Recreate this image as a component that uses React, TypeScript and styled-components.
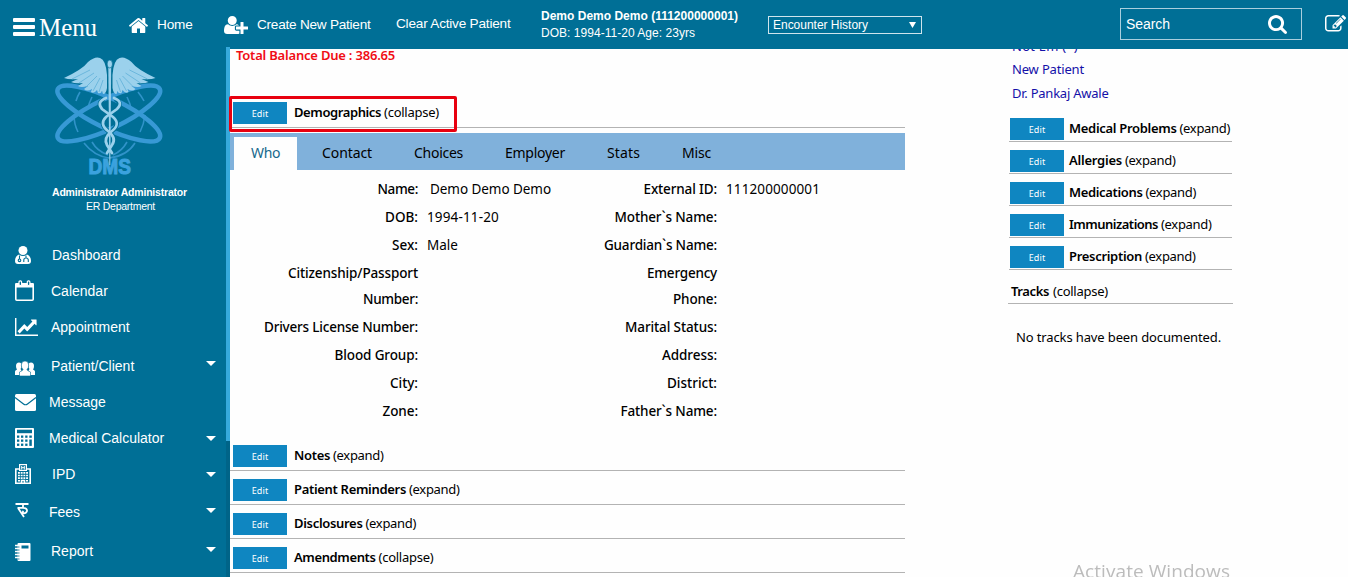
import React, { useLayoutEffect, useRef, useState } from 'react';
import styled, { createGlobalStyle, css } from 'styled-components';

const SANS = '"Liberation Sans", Arial, sans-serif';
const HUMANIST = '"Noto Sans", "Open Sans", sans-serif';
const TEAL = '#006f96';

const GlobalStyle = createGlobalStyle`
  * { box-sizing: border-box; }
  html, body { margin: 0; padding: 0; overflow: hidden; background: #fefefe; }
`;

/* ---------- text that tracks itself to a given measure ---------- */

const Tracked = styled.span`
  display: inline-block;
  white-space: pre;
`;

function Fit({ w, children }: { w: number; children: string }) {
  const ref = useRef<HTMLSpanElement>(null);
  const [spacing, setSpacing] = useState(0);
  useLayoutEffect(() => {
    if (!ref.current) return;
    const natural = ref.current.getBoundingClientRect().width;
    setSpacing((w - natural) / children.length);
  }, [w, children]);
  return (
    <Tracked ref={ref} style={{ letterSpacing: `${spacing}px` }}>
      {children}
    </Tracked>
  );
}

/* ---------- shell ---------- */

const Page = styled.div`
  display: flex;
  flex-direction: column;
  width: 1348px;
  height: 577px;
  overflow: hidden;
  background: #fefefe;
`;

const Header = styled.header`
  display: flex;
  flex: none;
  height: 49px;
  background: ${TEAL};
  color: #fff;
  font: 13.6px/16px ${SANS};
`;

const Body = styled.div`
  display: flex;
  flex: 1;
  min-height: 0;
`;

/* ---------- header ---------- */

const MenuButton = styled.div`
  display: flex;
  align-items: flex-start;
  width: 129px;
  padding: 18px 0 0 13px;
`;

const MenuLabel = styled.span`
  margin: -6px 0 0 4px;
  font: 25px/32px "Liberation Serif", "Times New Roman", serif;
`;

const HeaderLink = styled.div<{ $width: number; $gap?: number; $top: number }>`
  display: flex;
  align-items: center;
  gap: ${(p) => p.$gap ?? 0}px;
  width: ${(p) => p.$width}px;
  height: 18px;
  margin-top: ${(p) => p.$top}px;
  white-space: nowrap;
`;

const PatientInfo = styled.div`
  width: 227px;
  padding-top: 8px;
  font-size: 12px;
  line-height: 17px;
`;

const EncounterSelect = styled.div`
  display: flex;
  align-items: center;
  justify-content: space-between;
  width: 154px;
  height: 18px;
  margin-top: 16px;
  padding: 0 5px 0 4px;
  border: 1px solid #cfe4ec;
  font-size: 12px;
`;

const SearchBox = styled.div`
  display: flex;
  align-items: flex-start;
  justify-content: space-between;
  width: 182px;
  height: 32px;
  margin: 8px 0 0 198px;
  padding: 6px 14px 0 5px;
  border: 1px solid #a9cfde;
  font-size: 14px;
  line-height: 18px;
`;

const EditNote = styled.div`
  margin: 15px 0 0 23px;
`;

/* ---------- sidebar ---------- */

const Sidebar = styled.nav`
  width: 226px;
  flex: none;
  background: ${TEAL};
  color: #fff;
`;

const LogoArea = styled.div`
  display: flex;
  justify-content: center;
  height: 134px;
  padding: 6px 0 0;
  margin-right: 8px;
`;

const UserName = styled.div`
  margin-right: -13px;
  width: 239px;
  text-align: center;
  font: bold 10.5px/14px ${SANS};
  padding-top: 2px;
`;

const Department = styled.div`
  width: 241px;
  text-align: center;
  font: 10.5px/14px ${SANS};
`;

const NavList = styled.div`
  padding-top: 24px;
`;

const NavItem = styled.div<{ $before?: number }>`
  display: flex;
  align-items: center;
  height: 36px;
  margin-top: ${(p) => p.$before ?? 0}px;
  padding: 0 10px 0 15px;
  font: 14px/18px ${SANS};
`;

const NavIcon = styled.span<{ $slot: number; $drop?: number }>`
  display: flex;
  width: ${(p) => p.$slot}px;
  margin-top: ${(p) => p.$drop ?? 0}px;
`;

const NavLabel = styled.span`
  flex: 1;
`;

const Caret = styled.span<{ $lift: number }>`
  border: 5px solid transparent;
  border-top-color: #fff;
  border-bottom: 0;
  margin-top: ${(p) => p.$lift}px;
`;

const ScrollTrack = styled.div`
  position: relative;
  flex: none;
  width: 4px;
  margin-top: -2px;
  background: #006488;
`;

const ScrollThumb = styled.div`
  height: 394px;
  background: #36a9dc;
`;

/* ---------- main column ---------- */

const Main = styled.main`
  width: 675px;
  flex: none;
  color: #000;
  font: 13.5px/22px ${HUMANIST};
`;

const Balance = styled.div`
  margin-top: -5px;
  padding-left: 6px;
  color: #f00c14;
  font-size: 13px;
  font-weight: 600;
`;

const Section = styled.div<{ $before?: number; $side?: boolean }>`
  display: flex;
  height: ${(p) => (p.$side ? 28 : 30)}px;
  margin: ${(p) => p.$before ?? 4}px ${(p) => (p.$side ? 1 : 0)}px 0;
  padding: 4px 0 0 ${(p) => (p.$side ? 1 : 3)}px;
  border-bottom: 1px solid #b3b3b3;
  font-size: 13px;
  line-height: 21px;
  white-space: nowrap;

  b { font-weight: 600; margin-right: 3px; }
`;

const EditButton = styled.span<{ $gap: number }>`
  display: flex;
  align-items: center;
  justify-content: center;
  width: 54px;
  height: 22px;
  margin-right: ${(p) => p.$gap}px;
  background: #0f86c1;
  color: #fff;
  font-size: 9px;
`;

const Highlighted = styled.div`
  position: relative;
`;

const HighlightFrame = styled.div`
  position: absolute;
  left: -1px;
  top: -2px;
  width: 228px;
  height: 36px;
  border: 3px solid #e8000f;
  border-radius: 2px;
`;

const TabBar = styled.div`
  display: flex;
  gap: 8px;
  height: 37px;
  margin-top: 5px;
  padding: 4px 0 0 4px;
  background: #80b1db;
  font-size: 14px;
`;

const Tab = styled.div<{ $active?: boolean }>`
  padding: 0 17px;
  line-height: 32px;
  ${(p) =>
    p.$active &&
    css`
      background: #fefefe;
      color: #16688c;
    `}
`;

const Form = styled.div`
  padding: 5px 0 12px;
`;

const FormRow = styled.div<{ $tall?: boolean }>`
  display: grid;
  grid-template-columns: 188px 197px 102px 1fr;
  height: ${(p) => (p.$tall ? 54 : 28)}px;
  padding-top: 1px;
  line-height: 26px;
  white-space: nowrap;
`;

const Label = styled.div`
  display: flex;
  flex-direction: column;
  align-items: flex-end;
  font-weight: 500;
`;

const Value = styled.div<{ $indent: number }>`
  padding-left: ${(p) => p.$indent}px;
`;

/* ---------- right column ---------- */

const Aside = styled.aside`
  width: 225px;
  margin-left: 103px;
  overflow: hidden;
  color: #000;
  font: 13.5px/24px ${HUMANIST};
`;

const Links = styled.div`
  margin-top: -16px;
  padding: 0 0 5px 4px;
  color: #1410a8;
  font-size: 13px;

  div { height: 24px; }
  div:first-child { line-height: 26px; }
`;

const TracksTitle = styled.div`
  height: 34px;
  padding: 11px 0 0 3px;
  border-bottom: 1px solid #b3b3b3;
  font-size: 13px;
  line-height: 21px;

  b { font-weight: 600; margin-right: 4px; }
`;

const NoTracks = styled.div`
  padding: 21px 0 0 8px;
  font-size: 13px;
`;

const Watermark = styled.div`
  position: fixed;
  left: 1073px;
  top: 557px;
  color: #bcbcbc;
  font: 19px/28px "Open Sans", sans-serif;
`;

/* ---------- icons ---------- */

const PATHS = {
  home: 'M1472 992v480q0 26-19 45t-45 19h-384v-384h-256v384h-384q-26 0-45-19t-19-45v-480q0-1 .5-3t.5-3l575-474 575 474q1 2 1 6zm223-69l-62 74q-8 9-21 11h-3q-13 0-21-7l-692-577-692 577q-12 8-24 7-13-2-21-11l-62-74q-8-10-7-23.500t11-21.500l719-599q32-26 76-26t76 26l244 204v-195q0-14 9-23t23-9h192q14 0 23 9t9 23v408l219 182q10 8 11 21.500t-7 23.500z',
  userPlus:
    'M704 896q-159 0-271.500-112.500t-112.500-271.500 112.500-271.500 271.500-112.500 271.500 112.500 112.500 271.500-112.500 271.500-271.500 112.500zm960 128h352q13 0 22.500 9.500t9.500 22.500v192q0 13-9.500 22.500t-22.500 9.500h-352v352q0 13-9.500 22.500t-22.500 9.500h-192q-13 0-22.500-9.500t-9.500-22.500v-352h-352q-13 0-22.500-9.500t-9.500-22.500v-192q0-13 9.500-22.500t22.500-9.500h352v-352q0-13 9.500-22.500t22.500-9.500h192q13 0 22.500 9.500t9.500 22.500v352zm-736 224q0 52 38 90t90 38h256v238q-68 50-171 50h-874q-121 0-194-69t-73-190q0-53 3.500-103.500t14-109 26.500-108.500 43-97.500 62-81 85.500-53.500 111.500-20q19 0 39 17 79 61 154.500 91.500t164.500 30.500 164.500-30.500 154.500-91.500q20-17 39-17 132 0 217 96h-223q-52 0-90 38t-38 90v192z',
  search:
    'M1216 832q0-185-131.500-316.500t-316.500-131.500-316.500 131.500-131.500 316.500 131.500 316.500 316.500 131.500 316.500-131.500 131.500-316.500zm512 832q0 52-38 90t-90 38q-54 0-90-38l-343-342q-179 124-399 124-143 0-273.500-55.500t-225-150-150-225-55.500-273.500 55.500-273.500 150-225 225-150 273.500-55.500 273.500 55.500 225 150 150 225 55.500 273.500q0 220-124 399l343 343q37 37 37 90z',
  compose:
    'M888 1184l116-116-152-152-116 116v56h96v96h56zm440-720q-16-16-33 1l-350 350q-17 17-1 33t33-1l350-350q17-17 1-33zm80 594v190q0 119-84.500 203.500t-203.500 84.500h-832q-119 0-203.500-84.500t-84.500-203.500v-832q0-119 84.500-203.500t203.500-84.500h832q63 0 117 25 15 7 18 23 3 17-9 29l-49 49q-14 14-32 8-23-6-45-6h-832q-66 0-113 47t-47 113v832q0 66 47 113t113 47h832q66 0 113-47t47-113v-126q0-13 9-22l64-64q15-15 35-7t20 29zm-96-738l288 288-672 672h-288v-288zm444 132l-92 92-288-288 92-92q28-28 68-28t68 28l152 152q28 28 28 68t-28 68z',
  chart:
    'M2048 1536v128h-2048v-1536h128v1408h1920zm-128-1248v435q0 21-19.500 29.500t-35.500-7.500l-121-121-633 633q-10 10-23 10t-23-10l-233-233-416 416-192-192 585-585q10-10 23-10t23 10l233 233 464-464-121-121q-16-16-7.500-35.500t29.500-19.500h435q14 0 23 9t9 23z',
};

function Glyph({ d, box, w, h }: { d: string; box: string; w: number; h: number }) {
  return (
    <svg width={w} height={h} viewBox={box} fill="#fff" preserveAspectRatio="none">
      <path d={d} />
    </svg>
  );
}

const BarsIcon = () => (
  <svg width="22" height="18" fill="#fff">
    <rect width="22" height="4" rx="1" />
    <rect y="7" width="22" height="4" rx="1" />
    <rect y="14" width="22" height="4" rx="1" />
  </svg>
);

const DoctorIcon = () => (
  <svg width="16" height="18" viewBox="0 0 16 18" fill="#fff">
    <circle cx="8" cy="4.500" r="4.500" />
    <path d="M4 8.500Q8 11.500 12 8.500Q16 10 16 15Q16 18 13 18H3Q0 18 0 15Q0 10 4 8.500Z" />
    <g fill="none" stroke={TEAL} strokeWidth="1.100">
      <path d="M4.500 9.500V13M11 9.500V12M8.800 16V14Q8.800 12 11 12T13.300 14V16" />
      <circle cx="4.500" cy="14.300" r="1.300" />
    </g>
  </svg>
);

const CalendarIcon = () => (
  <svg width="19" height="21" viewBox="0 0 19 21" fill="none" stroke="#fff">
    <rect x=".8" y="4" width="17.400" height="16.200" rx="1" strokeWidth="1.600" />
    <path d="M.7 3.500H18.300V7H.7Z" fill="#fff" strokeWidth="1" />
    <rect x="4" y=".8" width="2.600" height="4.700" rx="1.200" fill={TEAL} strokeWidth="1.200" />
    <rect x="12.300" y=".8" width="2.600" height="4.700" rx="1.200" fill={TEAL} strokeWidth="1.200" />
  </svg>
);

const PeopleIcon = () => (
  <svg width="20" height="15" viewBox="0 0 20 15" fill="#fff">
    <path d="M1 5Q1 1.500 4 1.500T6.500 5Q6.500 7 5.500 8L6.500 9.500V14H0V10.500Q0 9.500 2 8.500Q1 7 1 5Z" />
    <path d="M19 5Q19 1.500 16 1.500T13.500 5Q13.500 7 14.500 8L13.500 9.500V14H20V10.500Q20 9.500 18 8.500Q19 7 19 5Z" />
    <path
      d="M6.300 4Q6.300 0 10 0T13.700 4Q13.700 7 12 8.500Q12 9.500 15.500 11V15H4.500V11Q8 9.500 8 8.500Q6.300 7 6.300 4Z"
      stroke={TEAL}
      strokeWidth=".6"
    />
  </svg>
);

const MailIcon = () => (
  <svg width="21" height="17" viewBox="0 0 21 17">
    <rect width="21" height="17" rx="1.500" fill="#fff" />
    <path d="M0 3.500L8.500 10Q10.500 11.500 12.500 10L21 3.500" fill="none" stroke={TEAL} strokeWidth="1.200" />
  </svg>
);

const CalculatorIcon = () => (
  <svg width="19" height="20" viewBox="0 0 19 20" fill="#fff">
    <rect width="19" height="20" rx="1" />
    <g fill={TEAL}>
      <rect x="2" y="1.700" width="15" height="3.500" />
      {[7.5, 11.5, 15.6].map((y) =>
        [2, 6, 10.2].map((x) => <rect key={`${x}-${y}`} x={x} y={y} width="2.300" height="2.300" />),
      )}
      <rect x="14.300" y="7.500" width="2.500" height="2.300" />
      <rect x="14.300" y="11.500" width="2.500" height="6.400" />
    </g>
  </svg>
);

const HospitalIcon = () => (
  <svg width="16" height="20" viewBox="0 0 16 20" fill="none" stroke="#fff">
    <path d="M.8 5H15.200V19.200H.8Z" strokeWidth="1.600" />
    <rect x="4.600" y=".6" width="6.800" height="5.800" fill={TEAL} strokeWidth="1.200" />
    <path d="M6.700 2V5.500M9.300 2V5.500M6.700 3.700H9.300" strokeWidth="1" />
    <path d="M3 8.800H13M3 11.500H13M3 14.200H13" strokeWidth="1.700" strokeDasharray="1.900 .8" />
    <path d="M3 16.700H5M11 16.700H13M6.500 19V16.500H9.500V19" strokeWidth="1.500" />
  </svg>
);

const RupeeIcon = () => (
  <svg width="14" height="15" viewBox="0 0 14 15" fill="none" stroke="#fff" strokeWidth="1.800">
    <path d="M.5 1H13.500M8 1V5M2.500 4.800H8Q12.300 5 12 8Q11.300 10.300 8.800 10.300Q7 9.500 8.500 8M3 5Q6 9.500 9 14" />
  </svg>
);

const NotebookIcon = () => (
  <svg width="16" height="18" viewBox="0 0 16 18">
    <rect x="2.500" width="13" height="18" rx="1" fill="#fff" />
    <rect x="6.500" y="2.500" width="7" height="3" fill={TEAL} />
    <path d="M0 2.500H4M0 5.500H4M0 8.500H4M0 11.500H4M0 14.500H4" stroke="#fff" strokeWidth="1.500" />
    <path d="M2.500 4H4.500M2.500 7H4.500M2.500 10H4.500M2.500 13H4.500M2.500 16H4.500" stroke={TEAL} strokeWidth=".8" />
  </svg>
);

const WING =
  'M64 78Q83 69 88 62Q95 56 100 58Q106 60 107 75V88Q106 94 103 94L102 91Q101 94 98 93L97 90Q94 94 91 92L92 89Q87 92 84 89L88 86Q81 88 78 86L83 83Q75 84 71 82L78 79Q69 80 64 78Z';

const DmsLogo = () => (
  <svg width="118" height="121" viewBox="50 55 118 121" fill="none">
    <g stroke="#3093c9" strokeWidth="1.600">
      <path d="M84 143Q94 156 109 158Q127 156 135 143M92 142Q97 151 108 155M127 142Q122 151 113 155" />
      <path d="M74 115Q74 124 78 132M145 115Q144 124 140 132M80 92Q77 97 76 101M138 92Q142 97 144 101M92 97Q89 103 88 108M127 97Q130 103 131 108" />
    </g>
    <g stroke="#3799d5" strokeWidth="4.600">
      <ellipse cx="108.800" cy="113.500" rx="56.500" ry="15" transform="rotate(25.600 108.800 113.500)" />
      <ellipse cx="108.800" cy="113.500" rx="56.500" ry="15" transform="rotate(-25.600 108.800 113.500)" />
    </g>
    <text
      x="88.500"
      y="173.500"
      textLength="42.500"
      lengthAdjust="spacingAndGlyphs"
      fill="#3ba2de"
      stroke="#3ba2de"
      strokeWidth="1"
      fontFamily="Liberation Sans, Arial, sans-serif"
      fontSize="21.500"
      fontWeight="bold"
    >
      DMS
    </text>
    {[undefined, 'translate(219.500 0) scale(-1 1)'].map((t, i) => (
      <g key={i} transform={t}>
        <path d={WING} fill="#9bd1ec" />
        <path d="M72 79L90 70M79 83L94 73M86 87L97 76M93 91L100 78M99 92L103 80" stroke="#5fb0d8" strokeWidth=".8" />
      </g>
    ))}
    <g stroke={TEAL} strokeWidth="4.500">
      <path d="M104 99Q97 103 102 109L113 117Q121 124 112 131Q103 138 107 145L112 153" />
      <path d="M115 99Q123 103 117 109L106 117Q99 124 108 131Q117 138 112 145L107 153" />
    </g>
    <g stroke="#9bd1ec" strokeWidth="2.700" strokeLinecap="round">
      <path d="M106 98Q96 102 102 109L113 117Q121 124 112 131Q103 138 107 145L112 153" />
      <path d="M114 98Q124 102 117 109L106 117Q99 124 108 131Q117 138 112 145L107 153" />
    </g>
    <path d="M108.300 66H111.200L110.300 165H109.300Z" fill="#9bd1ec" />
    <ellipse cx="109.800" cy="64" rx="2.700" ry="4" fill="#9bd1ec" stroke={TEAL} strokeWidth=".7" />
  </svg>
);

/* ---------- data ---------- */

type NavEntry = {
  label: string;
  icon: React.ReactNode;
  slot: number;
  drop?: number;
  before?: number;
  caret?: number;
};

const NAV: NavEntry[] = [
  { label: 'Dashboard', icon: <DoctorIcon />, slot: 37 },
  { label: 'Calendar', icon: <CalendarIcon />, slot: 36, drop: -1 },
  { label: 'Appointment', icon: <Glyph d={PATHS.chart} box="0 128 2048 1536" w={23} h={18} />, slot: 36 },
  { label: 'Patient/Client', icon: <PeopleIcon />, slot: 36, drop: 4, before: 3, caret: -5 },
  { label: 'Message', icon: <MailIcon />, slot: 34, drop: 1 },
  { label: 'Medical Calculator', icon: <CalculatorIcon />, slot: 34 , caret: 1 },
  { label: 'IPD', icon: <HospitalIcon />, slot: 37, caret: 1 },
  { label: 'Fees', icon: <RupeeIcon />, slot: 34, drop: -4, before: 2, caret: -3 },
  { label: 'Report', icon: <NotebookIcon />, slot: 36, drop: 2, before: 3, caret: -4 },
];

type Phrase = [string, number];

const TABS: Phrase[] = [
  ['Who', 29],
  ['Contact', 50],
  ['Choices', 49],
  ['Employer', 60],
  ['Stats', 33],
  ['Misc', 29],
];

const ROWS: { left: Phrase[]; value?: Phrase; indent?: number; right: Phrase[]; value2?: Phrase }[] = [
  { left: [['Name:', 40.5]], value: ['Demo Demo Demo', 121], indent: 12, right: [['External ID:', 73.5]], value2: ['111200000001', 94] },
  { left: [['DOB:', 33]], value: ['1994-11-20', 72], right: [['Mother`s Name:', 102.5]] },
  { left: [['Sex:', 26]], value: ['Male', 31], right: [['Guardian`s Name:', 113]] },
  { left: [['Citizenship/Passport', 130], ['Number:', 55]], right: [['Emergency', 70], ['Phone:', 44]] },
  { left: [['Drivers License Number:', 154]], right: [['Marital Status:', 92]] },
  { left: [['Blood Group:', 83.5]], right: [['Address:', 55]] },
  { left: [['City:', 28]], right: [['District:', 50]] },
  { left: [['Zone:', 35.5]], right: [['Father`s Name:', 96.5]] },
];

const SECTIONS: [string, number, boolean][] = [
  ['Notes', 36, false],
  ['Patient Reminders', 112, false],
  ['Disclosures', 68.5, false],
  ['Amendments', 81.5, true],
];

const SIDE_SECTIONS: Phrase[] = [
  ['Medical Problems', 107.5],
  ['Allergies', 53],
  ['Medications', 73.5],
  ['Immunizations', 89],
  ['Prescription', 73],
];

/* ---------- composed parts ---------- */

const Toggle = ({ open }: { open?: boolean }) =>
  open ? <Fit w={55}>(collapse)</Fit> : <Fit w={50.5}>(expand)</Fit>;

function Panel({ title, w, open, side, before }: { title: string; w: number; open?: boolean; side?: boolean; before?: number }) {
  return (
    <Section $side={side} $before={before}>
      <EditButton $gap={side ? 5 : 7}>
        <Fit w={16.5}>Edit</Fit>
      </EditButton>
      <b>
        <Fit w={w}>{title}</Fit>
      </b>
      <Toggle open={open} />
    </Section>
  );
}

export default function App() {
  return (
    <Page>
      <GlobalStyle />
      <Header>
        <MenuButton>
          <BarsIcon />
          <MenuLabel>
            <Fit w={58}>Menu</Fit>
          </MenuLabel>
        </MenuButton>
        <HeaderLink $width={95} $gap={9} $top={16}>
          <Glyph d={PATHS.home} box="89 253 1614 1283" w={19} h={15} />
          <Fit w={35.5}>Home</Fit>
        </HeaderLink>
        <HeaderLink $width={172} $gap={9} $top={16}>
          <Glyph d={PATHS.userPlus} box="0 128 2048 1536" w={24} h={18} />
          <Fit w={113.5}>Create New Patient</Fit>
        </HeaderLink>
        <HeaderLink $width={145} $top={15}>
          <Fit w={114.5}>Clear Active Patient</Fit>
        </HeaderLink>
        <PatientInfo>
          <b>
            <Fit w={197}>Demo Demo Demo (111200000001)</Fit>
          </b>
          <br />
          <Fit w={154}>DOB: 1994-11-20 Age: 23yrs</Fit>
        </PatientInfo>
        <EncounterSelect>
          <Fit w={95}>Encounter History</Fit>
          <svg width="7" height="6">
            <path d="M0 0H7L3.500 6Z" fill="#fff" />
          </svg>
        </EncounterSelect>
        <SearchBox>
          <Fit w={44}>Search</Fit>
          <Glyph d={PATHS.search} box="64 128 1664 1664" w={19} h={19} />
        </SearchBox>
        <EditNote>
          <Glyph d={PATHS.compose} box="0 128 1784 1536" w={21} h={18} />
        </EditNote>
      </Header>

      <Body>
        <Sidebar>
          <LogoArea>
            <DmsLogo />
          </LogoArea>
          <UserName>
            <Fit w={135}>Administrator Administrator</Fit>
          </UserName>
          <Department>
            <Fit w={69}>ER Department</Fit>
          </Department>
          <NavList>
            {NAV.map((n) => (
              <NavItem key={n.label} $before={n.before}>
                <NavIcon $slot={n.slot} $drop={n.drop}>
                  {n.icon}
                </NavIcon>
                <NavLabel>{n.label}</NavLabel>
                {n.caret !== undefined && <Caret $lift={n.caret} />}
              </NavItem>
            ))}
          </NavList>
        </Sidebar>
        <ScrollTrack>
          <ScrollThumb />
        </ScrollTrack>

        <Main>
          <Balance>
            <Fit w={159}>Total Balance Due : 386.65</Fit>
          </Balance>
          <Highlighted>
            <Panel title="Demographics" w={87} open before={32} />
            <HighlightFrame />
          </Highlighted>
          <TabBar>
            {TABS.map(([label, w], i) => (
              <Tab key={label} $active={i === 0}>
                <Fit w={w}>{label}</Fit>
              </Tab>
            ))}
          </TabBar>
          <Form>
            {ROWS.map((r) => (
              <FormRow key={r.left[0][0]} $tall={r.left.length > 1}>
                <Label>
                  {r.left.map(([t, w]) => (
                    <Fit key={t} w={w}>{t}</Fit>
                  ))}
                </Label>
                <Value $indent={r.indent ?? 9}>{r.value && <Fit w={r.value[1]}>{r.value[0]}</Fit>}</Value>
                <Label>
                  {r.right.map(([t, w]) => (
                    <Fit key={t} w={w}>{t}</Fit>
                  ))}
                </Label>
                <Value $indent={9}>{r.value2 && <Fit w={r.value2[1]}>{r.value2[0]}</Fit>}</Value>
              </FormRow>
            ))}
          </Form>
          {SECTIONS.map(([title, w, open]) => (
            <Panel key={title} title={title} w={w} open={open} />
          ))}
        </Main>

        <Aside>
          <Links>
            <div>
              <Fit w={66}>Not Em (*)</Fit>
            </div>
            <div>
              <Fit w={72}>New Patient</Fit>
            </div>
            <div>
              <Fit w={96.5}>Dr. Pankaj Awale</Fit>
            </div>
          </Links>
          {SIDE_SECTIONS.map(([title, w]) => (
            <Panel key={title} title={title} w={w} side />
          ))}
          <TracksTitle>
            <b>
              <Fit w={38}>Tracks</Fit>
            </b>
            <Toggle open />
          </TracksTitle>
          <NoTracks>
            <Fit w={205}>No tracks have been documented.</Fit>
          </NoTracks>
        </Aside>
      </Body>
      <Watermark>
        <Fit w={157}>Activate Windows</Fit>
      </Watermark>
    </Page>
  );
}
